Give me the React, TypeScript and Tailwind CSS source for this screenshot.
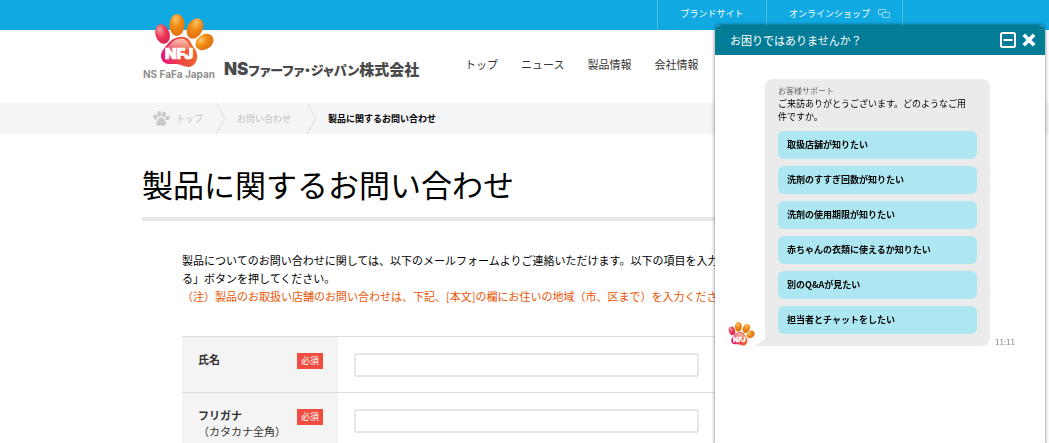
import React from "react";

const topics = [
  "取扱店舗が知りたい",
  "洗剤のすすぎ回数が知りたい",
  "洗剤の使用期限が知りたい",
  "赤ちゃんの衣類に使えるか知りたい",
  "別のQ&Aが見たい",
  "担当者とチャットをしたい",
];

const navItems = ["トップ", "ニュース", "製品情報", "会社情報"];

const fields = [
  { id: "name", label: "氏名", note: "" },
  { id: "kana", label: "フリガナ", note: "（カタカナ全角）" },
];

function BrandPaw({ id, className }: { id: string; className: string }) {
  return (
    <svg viewBox="0 0 60 54" className={className} aria-hidden="true">
      <defs>
        <radialGradient id={id + "-orange"} cx="0.4" cy="0.25" r="0.8">
          <stop offset="0" stopColor="#fcc46a" />
          <stop offset="0.45" stopColor="#f08a12" />
          <stop offset="1" stopColor="#e26a10" />
        </radialGradient>
        <radialGradient id={id + "-red"} cx="0.4" cy="0.25" r="0.8">
          <stop offset="0" stopColor="#f99aa0" />
          <stop offset="0.5" stopColor="#ea3a55" />
          <stop offset="1" stopColor="#d81e50" />
        </radialGradient>
        <linearGradient id={id + "-pad"} x1="0" y1="0.6" x2="1" y2="0.4">
          <stop offset="0" stopColor="#e5177a" />
          <stop offset="0.5" stopColor="#ee4a45" />
          <stop offset="1" stopColor="#ef6a26" />
        </linearGradient>
        <linearGradient id={id + "-shine"} x1="0" y1="0" x2="0" y2="1">
          <stop offset="0" stopColor="#ffffff" stopOpacity="0.65" />
          <stop offset="1" stopColor="#ffffff" stopOpacity="0.05" />
        </linearGradient>
      </defs>
      <ellipse cx="8.5" cy="20" rx="7" ry="10" transform="rotate(-18 8.5 20)" fill={`url(#${id}-red)`} />
      <ellipse cx="23" cy="11" rx="7.6" ry="11" transform="rotate(2 23 11)" fill={`url(#${id}-orange)`} />
      <ellipse cx="41" cy="14.5" rx="7.6" ry="10.8" transform="rotate(28 41 14.5)" fill={`url(#${id}-orange)`} />
      <ellipse cx="50.5" cy="28" rx="9.6" ry="7.4" transform="rotate(-35 50.5 28)" fill={`url(#${id}-orange)`} />
      <path
        d="M25 23c6-1 10 1 12 6 2 4 5 6 6 11 1 6-2 12-8 13-5 0-8-3-13-3-6 0-11 1-14-4-3-6 1-10 4-14 4-5 7-8 13-9z"
        fill={`url(#${id}-pad)`}
      />
      <path d="M25 25c5-1 8 1 10 5l3 6c-8-2-18-2-27 2 4-6 7-12 14-13z" fill={`url(#${id}-shine)`} />
      <text
        x="25"
        y="45"
        textAnchor="middle"
        fontSize="15"
        fontWeight="900"
        fill="#fff"
        stroke="#fff"
        strokeWidth="0.7"
        className="font-['Inter','Liberation_Sans',sans-serif]"
      >
        NFJ
      </text>
    </svg>
  );
}

function GrayPaw() {
  return (
    <svg viewBox="0 0 17 15" className="h-[15px] w-[17px]" fill="#c6c9cd" aria-hidden="true">
      <ellipse cx="2.3" cy="6" rx="1.9" ry="2.7" transform="rotate(-20 2.3 6)" />
      <ellipse cx="6.3" cy="3" rx="2" ry="2.9" />
      <ellipse cx="11" cy="3.3" rx="2" ry="2.9" transform="rotate(16 11 3.3)" />
      <ellipse cx="14.5" cy="7" rx="2.5" ry="1.9" transform="rotate(-40 14.5 7)" />
      <path d="M8 6.5c2.200 0 3 1.300 3.700 2.700.7 1.200 1.500 1.900 1.300 3.400-.2 1.500-1.500 2.300-3 2-1-.2-1.500-.5-2.500-.4-1.200.1-2.500.6-3.600-.3-1.200-1-.9-2.600 0-3.700C5 9 5.500 6.600 8 6.500z" />
    </svg>
  );
}

function Separator() {
  return (
    <svg viewBox="0 0 12 31" className="h-[31px] w-3" fill="none" aria-hidden="true">
      <path d="M1 0l9 15.5L1 31" stroke="#e2e4e7" strokeWidth="1.2" />
    </svg>
  );
}

function ChatPanel() {
  return (
    <aside className="fixed top-[25px] right-1 bottom-0 flex w-[330px] flex-col rounded-t-md bg-white shadow-[0_0_3px_1px_rgba(0,0,0,0.35)]">
      <header className="flex h-[30px] shrink-0 items-center rounded-t-md bg-[#037c97] pr-[9px] pl-[15px] text-white">
        <h2 className="flex-1 text-[11px]">お困りではありませんか？</h2>
        <button type="button" aria-label="最小化" className="mr-[6px]">
          <svg viewBox="0 0 16 16" className="size-4" fill="none" stroke="#fff" strokeWidth="2">
            <rect x="1" y="1" width="14" height="14" rx="1.5" />
            <path d="M3.5 8h9" />
          </svg>
        </button>
        <button type="button" aria-label="閉じる">
          <svg viewBox="0 0 14 14" className="size-[14px]" fill="none" stroke="#fff" strokeWidth="3.6">
            <path d="M1.8 1.8l10.4 10.4M12.2 1.8L1.8 12.2" />
          </svg>
        </button>
      </header>
      <div className="flex items-end pt-6 pl-[13px]">
        <BrandPaw id="avatar" className="h-6 w-[27px]" />
        <svg viewBox="0 0 10 7" className="h-[7px] w-[10px]" fill="#ebebeb" aria-hidden="true">
          <path d="M0 7L10 0v7z" />
        </svg>
        <div className="w-[225px] rounded-lg rounded-bl-none bg-[#ebebeb] px-[13px] pt-[6px] pb-3">
          <p className="text-[8px] leading-3 text-[#666]">お客様サポート</p>
          <p className="pr-2 text-[9px] leading-[13px] text-black">
            ご来訪ありがとうございます。どのようなご用件ですか。
          </p>
          <ul className="mt-2 flex flex-col gap-[7px]">
            {topics.map((topic) => (
              <li key={topic}>
                <button
                  type="button"
                  className="block h-7 w-full rounded-md bg-[#ade7f2] px-[9px] pb-px text-left text-[9px] font-bold text-black"
                >
                  {topic}
                </button>
              </li>
            ))}
          </ul>
        </div>
        <time className="ml-[5px] text-[8px] leading-2 text-[#888]">11:11</time>
      </div>
    </aside>
  );
}

export default function App() {
  return (
    <div
      lang="ja"
      className="h-screen overflow-x-hidden overflow-y-auto bg-white font-['Noto_Sans_CJK_JP',sans-serif] text-[#333] [scrollbar-width:none]"
    >
      <div className="bg-[#10a9e2]">
        <div className="mx-auto flex h-[30px] max-w-[765px] justify-end pr-1 text-[9px] text-white">
          <a href="#brand" className="flex w-[109px] items-center justify-center border-l border-[#4bbfe9] pb-[2px]">
            ブランドサイト
          </a>
          <a
            href="#shop"
            className="flex w-[137px] items-center justify-between border-x border-[#4bbfe9] pr-3 pb-[2px] pl-[22px]"
          >
            オンラインショップ
            <svg viewBox="0 0 12 9" className="mb-[2px] h-[9px] w-3" fill="none" stroke="#8fd8f3" aria-hidden="true">
              <path d="M4 5.5H.5v-5h7V3M4.5 3.5h7v5h-7z" />
            </svg>
          </a>
        </div>
      </div>

      <header className="mx-auto flex h-[73px] max-w-[765px] items-start">
        <a href="#top" className="-mt-4 flex w-[281px] items-end">
          <span className="flex w-[74px] flex-col items-center">
            <BrandPaw id="logo" className="ml-[10px] h-[54px] w-[60px]" />
            <span className="font-['Inter','Liberation_Sans',sans-serif] text-[10px] leading-3 font-bold whitespace-nowrap text-[#909090]">
              NS FaFa Japan
            </span>
          </span>
          <span className="ml-2 flex items-baseline font-black leading-5 whitespace-nowrap text-[#4a4a4a]">
            <span className="font-['Inter','Liberation_Sans',sans-serif] text-[17px]">NS</span>
            <span className="text-[13px] [font-feature-settings:'palt']">ファーファ・ジャパン</span>
            <span className="text-[15px]">株式会社</span>
          </span>
        </a>
        <nav className="mt-[26px] ml-[42px] flex gap-[23px] text-[11px] leading-4">
          {navItems.map((item) => (
            <a key={item} href="#nav" className="whitespace-nowrap">
              {item}
            </a>
          ))}
        </nav>
      </header>

      <div className="bg-[#f4f5f7]">
        <nav
          aria-label="パンくず"
          className="mx-auto flex h-[31px] max-w-[765px] items-center pl-[11px] text-[9px] whitespace-nowrap text-[#bfc1c4]"
        >
          <a href="#top" className="flex w-[62px] items-center gap-[6px]">
            <GrayPaw />
            トップ
          </a>
          <Separator />
          <a href="#contact" className="w-[79px] pl-[10px]">
            お問い合わせ
          </a>
          <Separator />
          <span className="pl-[10px] font-bold text-black">製品に関するお問い合わせ</span>
        </nav>
      </div>

      <main className="mx-auto max-w-[765px]">
        <h1 className="mt-7 border-b-4 border-[#e8e8e8] pb-3 text-[31px] leading-[43px] whitespace-nowrap text-black">
          製品に関するお問い合わせ
        </h1>
        <div className="px-10">
          <p className="mt-[30px] text-[11px] leading-[18px] whitespace-nowrap text-black">
            製品についてのお問い合わせに関しては、以下のメールフォームよりご連絡いただけます。以下の項目を入力
            <br />
            る」ボタンを押してください。
            <br />
            <span className="text-[#ea5504]">
              （注）製品のお取扱い店舗のお問い合わせは、下記、[本文]の欄にお住いの地域（市、区まで）を入力ください
            </span>
          </p>
          <form className="mt-[31px]">
            {fields.map((field) => (
              <div key={field.id} className="flex h-14 border-t border-[#dedede]">
                <label
                  htmlFor={field.id}
                  className="flex w-[156px] items-start justify-between bg-[#f4f4f4] pt-[14px] pr-[15px] pl-4 text-[11px]"
                >
                  <span className="leading-[16px] whitespace-nowrap">
                    <span className="block font-bold">{field.label}</span>
                    {field.note}
                  </span>
                  <span className="mt-[2px] -ml-4 bg-[#f04c40] px-1 text-[9px] leading-4 whitespace-nowrap text-white">
                    必須
                  </span>
                </label>
                <div className="pt-4 pl-4">
                  <input
                    id={field.id}
                    type="text"
                    className="block h-6 w-[345px] rounded-xs border-2 border-[#e6e6e6] bg-white px-2 text-[11px] outline-none"
                  />
                </div>
              </div>
            ))}
          </form>
        </div>
      </main>

      <ChatPanel />
    </div>
  );
}
